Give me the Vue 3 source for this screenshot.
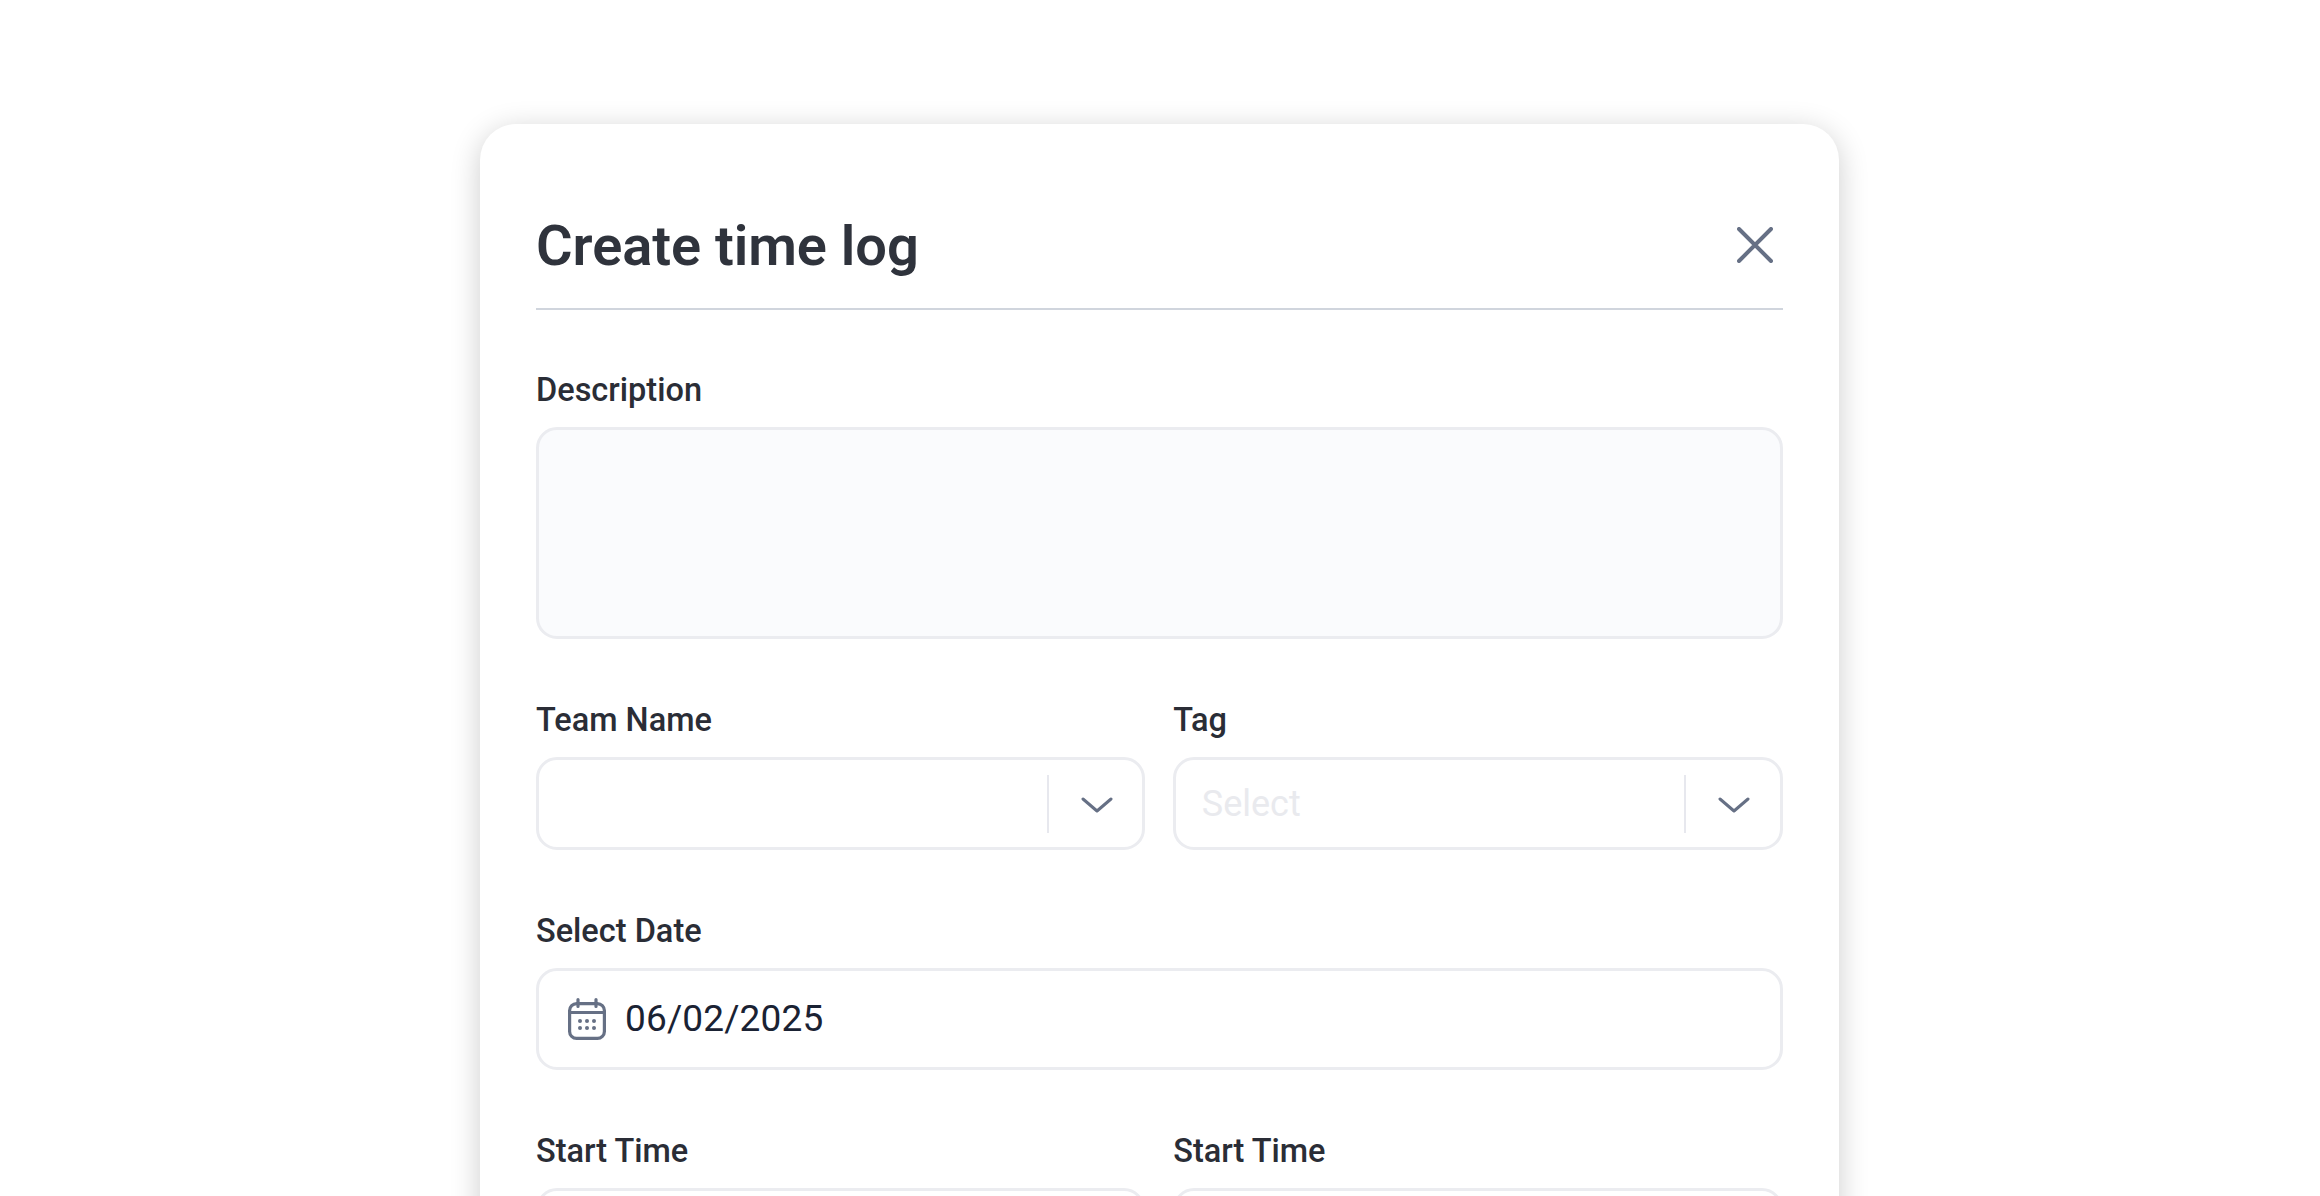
<script setup>
const times = ['Start Time', 'Start Time']
</script>

<template>
  <main class="page">
    <section class="card">
      <header class="head">
        <h1 class="title">Create time log</h1>
        <button class="close" type="button" aria-label="Close">
          <svg width="36" height="36" viewBox="0 0 36 36" fill="none" stroke="#667085" stroke-width="4" stroke-linecap="round">
            <path d="M2 2 34 34M34 2 2 34" />
          </svg>
        </button>
      </header>

      <div class="form">
        <div class="field">
          <label class="label">Description</label>
          <div class="textarea"></div>
        </div>

        <div class="row">
          <div class="field">
            <label class="label">Team Name</label>
            <div class="box select">
              <span class="value"></span>
              <span class="sep"></span>
              <svg class="chev" width="32" height="16" viewBox="0 0 32 16" fill="none" stroke="#667085" stroke-width="3" stroke-linecap="round" stroke-linejoin="round">
                <path d="M2 2 16 14 30 2" />
              </svg>
            </div>
          </div>
          <div class="field">
            <label class="label">Tag</label>
            <div class="box select">
              <span class="value placeholder">Select</span>
              <span class="sep"></span>
              <svg class="chev" width="32" height="16" viewBox="0 0 32 16" fill="none" stroke="#667085" stroke-width="3" stroke-linecap="round" stroke-linejoin="round">
                <path d="M2 2 16 14 30 2" />
              </svg>
            </div>
          </div>
        </div>

        <div class="field">
          <label class="label">Select Date</label>
          <div class="box date">
            <svg width="38" height="42" viewBox="0 0 38 42" fill="none" stroke="#667085" stroke-width="3.2" stroke-linecap="round">
              <rect x="1.6" y="5.6" width="34.8" height="34.8" rx="7" />
              <path d="M1.6 14.5H36.4M10 1.6V8.5M28 1.6V8.5" />
              <g fill="#667085" stroke="none">
                <circle cx="12" cy="23" r="2" /><circle cx="19" cy="23" r="2" /><circle cx="26" cy="23" r="2" />
                <circle cx="12" cy="30" r="2" /><circle cx="19" cy="30" r="2" /><circle cx="26" cy="30" r="2" />
              </g>
            </svg>
            <span class="date-text">06/02/2025</span>
          </div>
        </div>

        <div class="row">
          <div v-for="(t, i) in times" :key="i" class="field">
            <label class="label">{{ t }}</label>
            <div class="box time"></div>
          </div>
        </div>
      </div>
    </section>
  </main>
</template>

<style>
html, body { margin: 0; background: #fff; overflow: hidden; }
</style>

<style scoped>
.page {
  height: 1196px;
  overflow: hidden;
  padding-top: 124px;
  box-sizing: border-box;
  font-family: Roboto, "Liberation Sans", sans-serif;
}
.card {
  width: 1358.5px;
  margin-left: 480px;
  box-sizing: border-box;
  padding: 84px 56px 56px 56px;
  background: #fff;
  border-radius: 36px;
  box-shadow: 0 6px 30px rgba(0, 0, 0, 0.2);
}
.head {
  display: flex;
  align-items: center;
  justify-content: space-between;
  height: 102px;
  box-sizing: border-box;
  border-bottom: 2px solid #d0d5dd;
  padding-bottom: 24px;
}
.title {
  margin: 0;
  font-size: 56px;
  line-height: 72px;
  font-weight: 600;
  letter-spacing: -0.05px;
  color: #2f333c;
}
.close {
  border: 0;
  background: none;
  padding: 0;
  margin: 0 10px 2px 0;
  display: flex;
}
.form {
  display: flex;
  flex-direction: column;
  gap: 59px;
  padding-top: 58px;
}
.field {
  display: flex;
  flex-direction: column;
  gap: 15px;
  min-width: 0;
}
.label {
  font-size: 32.5px;
  line-height: 44px;
  font-weight: 500;
  color: #2a2d36;
}
.textarea {
  height: 212px;
  box-sizing: border-box;
  background: #fafbfd;
  border: 3px solid #ebecf0;
  border-radius: 21px;
}
.row {
  display: grid;
  grid-template-columns: 1fr 1fr;
  gap: 28px;
}
.box {
  box-sizing: border-box;
  border: 3px solid #ebecf0;
  border-radius: 21px;
  background: #fff;
  display: flex;
  align-items: center;
}
.select {
  height: 93px;
  padding: 0 29.5px 0 25.5px;
}
.value {
  flex: 1;
  font-size: 36px;
  line-height: 44px;
}
.placeholder { color: #e9eaee; }
.sep {
  width: 2px;
  height: 58px;
  background: #e7e8ee;
  margin-right: 32px;
}
.chev { margin-top: 2px; }
.date {
  height: 102px;
  padding: 0 29px;
  gap: 19px;
}
.date-text {
  font-size: 37px;
  line-height: 44px;
  letter-spacing: 0.15px;
  color: #1a2233;
}
.time { height: 93px; }
</style>
